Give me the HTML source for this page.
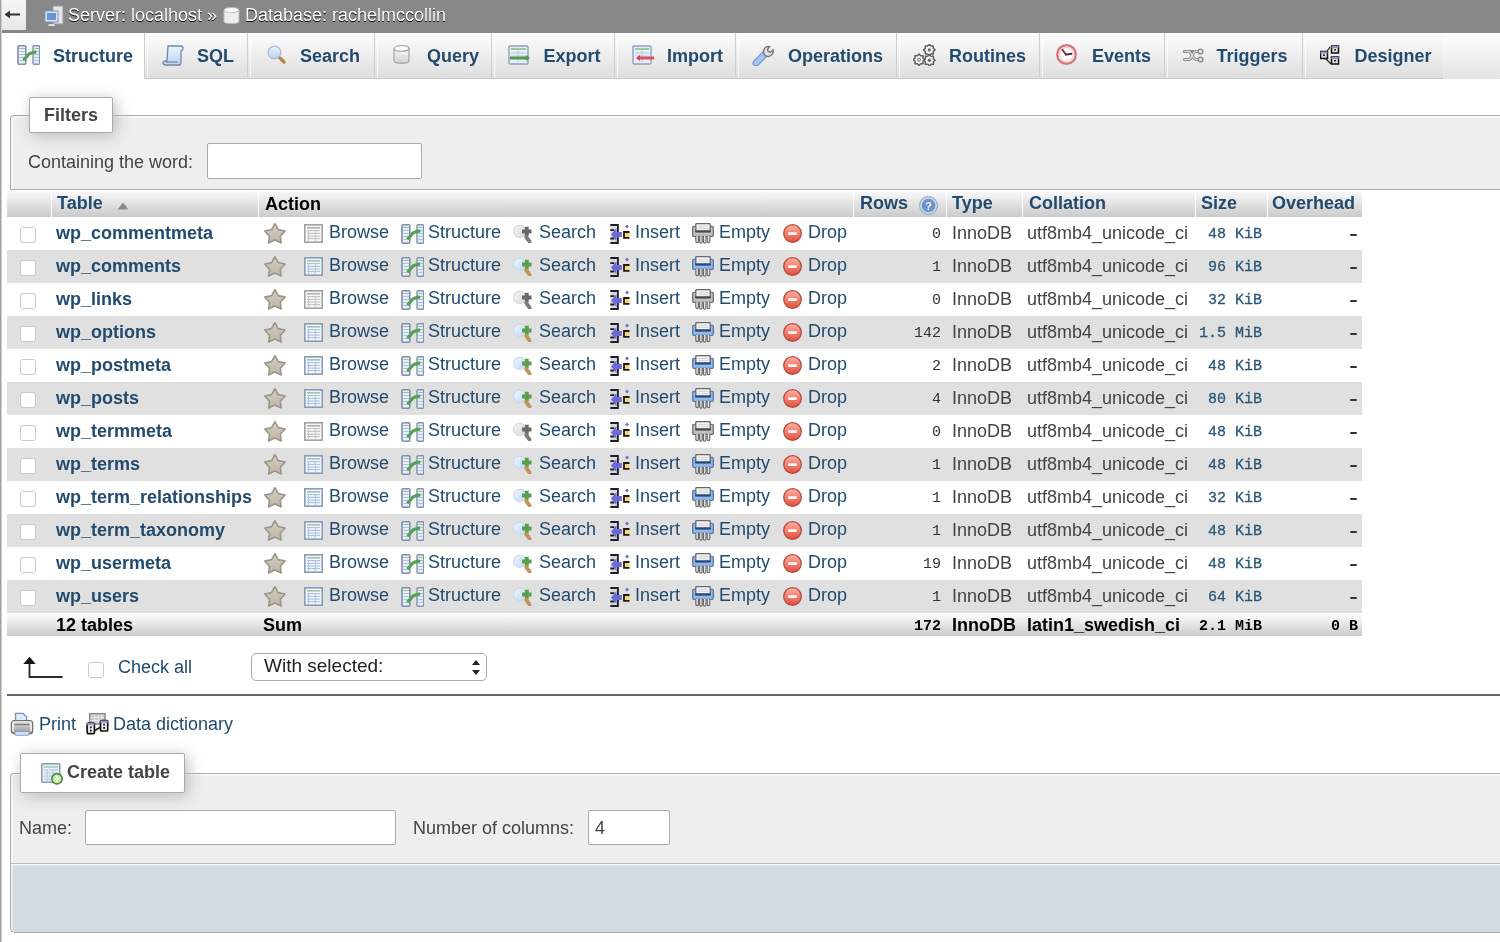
<!DOCTYPE html><html><head><meta charset="utf-8"><style>
*{margin:0;padding:0;box-sizing:border-box}
html,body{width:1500px;height:942px;overflow:hidden;background:#fff}
body{position:relative;font-family:"Liberation Sans",sans-serif;font-size:18px;color:#444}
.a{position:absolute}
.t{position:absolute;white-space:nowrap;line-height:20px}
.lk{color:#224b6e}
.b{font-weight:bold}
.mono{font-family:"Liberation Mono",monospace;font-size:15px}
svg.i{position:absolute;overflow:visible}
#topbar{left:0;top:0;width:1500px;height:33px;background:#888}
#coll{left:1px;top:0;width:25px;height:30px;background:linear-gradient(#f6f6f6,#e8e8e8)}
#navb{left:0;top:0;width:1px;height:942px;background:#a0a0a0;box-shadow:1px 0 0 #d0d0d0}
#tabs{left:2px;top:33px;width:1498px;height:46px;background:linear-gradient(#fff,#e3e3e3)}
.tab{position:absolute;top:33px;height:46px;background:linear-gradient(#fdfdfd,#dedede);border-left:1px solid #cfcfcf;border-bottom:1px solid #c8c8c8}
.tab:after{content:"";position:absolute;left:2px;top:0;width:1px;height:100%;background:rgba(255,255,255,.7)}
.tab.act{background:#fff;border:none}
.tab.act:after{display:none}
.tabt{position:absolute;top:13px;font-weight:bold;color:#224b6e;line-height:20px;white-space:nowrap}
.fs{position:absolute;background:#eee;border:1px solid #aaa;border-right:none;border-radius:4px 0 0 0;box-shadow:inset 1px 1px 2px #fff}
.leg{position:absolute;background:#fff;border:1px solid #aaa;border-radius:2px;box-shadow:3px 3px 15px #bbb}
.inp{position:absolute;background:#fff;border:1px solid #aaa;border-radius:2px}
.th{position:absolute;top:191px;height:26px;background:linear-gradient(#f9f9f9,#cbcbcb)}
.row{position:absolute;left:7px;width:1355px;height:33px}
.row.e{background:#e0e0e0}
.cb{position:absolute;width:16px;height:16px;border:1px solid #c9c9c9;border-radius:3px;background:#fff}
</style></head><body><div id="wrap" style="position:absolute;left:0;top:0;width:1500px;height:942px;overflow:hidden;background:#fff;will-change:transform">
<svg width="0" height="0" style="position:absolute">
<defs>
<linearGradient id="gb" x1="0" y1="0" x2="0" y2="1"><stop offset="0" stop-color="#eaf4ff"/><stop offset="1" stop-color="#b9d3f0"/></linearGradient>
<linearGradient id="gg" x1="0" y1="0" x2="0" y2="1"><stop offset="0" stop-color="#fafafa"/><stop offset="1" stop-color="#d0d0d0"/></linearGradient>
<linearGradient id="gred" x1="0" y1="0" x2="0" y2="1"><stop offset="0" stop-color="#ffb2a6"/><stop offset=".55" stop-color="#f07a6a"/><stop offset="1" stop-color="#e05040"/></linearGradient>
<radialGradient id="ghelp" cx=".4" cy=".35" r=".7"><stop offset="0" stop-color="#c9dcf3"/><stop offset="1" stop-color="#7ea0cc"/></radialGradient>
</defs>
<symbol id="i-server" viewBox="0 0 21 22">
 <rect x="9" y="1" width="10" height="18" fill="#e6e6e6" stroke="#9a9a9a"/>
 <rect x="1" y="6" width="13" height="11" fill="#d6e4f5" stroke="#7f98b8"/>
 <rect x="3" y="8" width="9" height="7" fill="#6b96d6"/>
 <path d="M5 19h5l1 2H4z" fill="#ddd"/>
</symbol>
<symbol id="i-db" viewBox="0 0 17 20">
 <path d="M1 4v12c0 2 15 2 15 0V4" fill="#eee" stroke="#bbb"/>
 <ellipse cx="8.5" cy="4" rx="7.5" ry="2.5" fill="#fff" stroke="#bbb"/>
</symbol>
<symbol id="i-struct" viewBox="0 0 23 22">
 <rect x="1.2" y="1.8" width="7.6" height="18.4" rx="1" fill="#e4eefa" stroke="#8796b0" stroke-width="1.6"/>
 <rect x="15.2" y="1.8" width="7" height="18.4" rx="1" fill="#e4eefa" stroke="#8796b0" stroke-width="1.6"/>
 <path d="M2.5 4.5h5.5" stroke="#9fc59a" stroke-width="1.2"/><path d="M16.5 4.5h5" stroke="#9fc59a" stroke-width="1.2"/>
 <path d="M2.5 7.5h5.5M2.5 10.5h5.5M2.5 13.5h5.5M2.5 16.5h5.5M16.5 7.5h5M16.5 10.5h5M16.5 13.5h5M16.5 16.5h5" stroke="#b4c4da" stroke-width="1"/>
 <path d="M5.5 17C8 15.5 9.5 13 11 11.5S14 9.5 15.5 8.5" stroke="#4e9a4e" stroke-width="3" fill="none" stroke-linecap="round"/>
</symbol>
<symbol id="i-rstruct" viewBox="0 0 23 20">
 <rect x="1" y="0.8" width="7.8" height="18.4" rx="1" fill="#e6f0fb" stroke="#7f8ea9" stroke-width="1.6"/>
 <rect x="16" y="0.8" width="6.6" height="18.4" rx="1" fill="#e6f0fb" stroke="#8493ad" stroke-width="1.4"/>
 <path d="M2.3 3.5h5.5M17.2 3.5h5" stroke="#9cc096" stroke-width="1.2"/>
 <path d="M2.3 6.5h5.5M2.3 9.5h5.5M2.3 12.5h5.5M2.3 15.5h5.5M17.2 6.5h5M17.2 9.5h5M17.2 12.5h5M17.2 15.5h5" stroke="#b0c0d6" stroke-width="1"/>
 <path d="M7.2 14.2C9 13 10 10.5 12 9S15.5 7.5 18 7.2" stroke="#55a052" stroke-width="3.2" fill="none" stroke-linecap="round"/>
</symbol>
<symbol id="i-sql" viewBox="0 0 23 22">
 <path d="M6 2h13c1.5 0 2 1 2 2s-1 3-2 3v11c0 2-1 3-2 3H4c-2 0-3-1-3-2s1-2 3-2h1z" fill="url(#gb)" stroke="#6f8aa8" stroke-width="1.3"/>
 <path d="M4 18h12" stroke="#6f8aa8" stroke-width="1.2"/>
</symbol>
<symbol id="i-search" viewBox="0 0 23 22">
 <circle cx="8.5" cy="8.5" r="6.3" fill="url(#gb)" stroke="#a8bdd6" stroke-width="1.3"/>
 <path d="M14 14l4 4" stroke="#b98545" stroke-width="3.4" stroke-linecap="round"/>
</symbol>
<symbol id="i-query" viewBox="0 0 23 22">
 <path d="M2 4v13c0 3 15 3 15 0V4" fill="url(#gg)" stroke="#aaa" stroke-width="1.3"/>
 <ellipse cx="9.5" cy="4.5" rx="7.5" ry="2.8" fill="#fff" stroke="#aaa" stroke-width="1.3"/>
</symbol>
<symbol id="i-export" viewBox="0 0 23 22">
 <rect x="1" y="2" width="19" height="18" rx="1" fill="#e3eefa" stroke="#8ea1bd" stroke-width="1.4"/>
 <path d="M3 5h15" stroke="#8fbf8a" stroke-width="1.6"/><path d="M3 9h15M3 12h15M10 6v12" stroke="#b7c7db" stroke-width=".9"/>
 <path d="M2 14h17" stroke="#4f9a4a" stroke-width="3"/><path d="M18 11l4 3-4 3z" fill="#4f9a4a"/>
</symbol>
<symbol id="i-import" viewBox="0 0 23 22">
 <rect x="1" y="2" width="18" height="18" rx="1" fill="#e3eefa" stroke="#8ea1bd" stroke-width="1.4"/>
 <path d="M3 5h14" stroke="#8fbf8a" stroke-width="1.6"/><path d="M3 9h14M3 12h14M10 6v12" stroke="#b7c7db" stroke-width=".9"/>
 <path d="M8 14h14" stroke="#e05060" stroke-width="3"/><path d="M8 11l-4 3 4 3z" fill="#d04050"/>
</symbol>
<symbol id="i-ops" viewBox="0 0 23 22">
 <path d="M4 19L12 11" stroke="#7393c9" stroke-width="7" stroke-linecap="round"/>
 <path d="M4 19L12 11" stroke="#a9c3ef" stroke-width="4.6" stroke-linecap="round"/>
 <path d="M12.5 10.5c-1.8-2.6-1-6.3 2-7.6 1.2-.5 2.3-.6 3.3-.3l-2.3 2.6.6 2.4 2.4.6 2.5-2.3c.4 1.3.2 2.8-.5 4-1.6 2.4-4.6 3-7 1.8z" fill="#e6e6e6" stroke="#7a7a7a" stroke-width="1.5" stroke-linejoin="round"/>
</symbol>
<symbol id="i-routines" viewBox="0 0 23 22">
 <g fill="#f5f5f5" stroke="#5e5e5e" stroke-width="1.5" stroke-linejoin="round">
 <path d="M16.3 0.2 L17.9 1.9 L20.3 1.9 L20.3 4.3 L22.0 5.9 L20.3 7.5 L20.3 9.9 L17.9 9.9 L16.3 11.6 L14.7 9.9 L12.3 9.9 L12.3 7.5 L10.6 5.9 L12.3 4.3 L12.3 1.9 L14.7 1.9Z"/><path d="M16.4 10.5 L18.0 12.2 L20.4 12.2 L20.4 14.6 L22.1 16.2 L20.4 17.8 L20.4 20.2 L18.0 20.2 L16.4 21.9 L14.8 20.2 L12.4 20.2 L12.4 17.8 L10.7 16.2 L12.4 14.6 L12.4 12.2 L14.8 12.2Z"/><path d="M6.0 10.0 L7.6 11.7 L10.0 11.7 L10.0 14.1 L11.7 15.7 L10.0 17.3 L10.0 19.7 L7.6 19.7 L6.0 21.4 L4.4 19.7 L2.0 19.7 L2.0 17.3 L0.3 15.7 L2.0 14.1 L2.0 11.7 L4.4 11.7Z"/>
 </g>
 <circle cx="16.3" cy="5.9" r="1.6" fill="#6a6a6a"/><circle cx="6" cy="15.7" r="1.5" fill="none" stroke="#6a6a6a" stroke-width="1"/><circle cx="16.4" cy="16.2" r="1.7" fill="#6a6a6a"/>
</symbol>
<symbol id="i-events" viewBox="0 0 23 22">
 <circle cx="10.5" cy="10.5" r="9.3" fill="#fff" stroke="#d2787e" stroke-width="2.4"/>
 <circle cx="10.5" cy="10.5" r="6.9" fill="none" stroke="#f2cfcf" stroke-width="1.2"/>
 <path d="M6.3 5.6L10 10.6" stroke="#7a3a44" stroke-width="1.8" stroke-linecap="round"/>
 <path d="M10 10.6L15.4 9.7" stroke="#333" stroke-width="1.9" stroke-linecap="round"/>
</symbol>
<symbol id="i-triggers" viewBox="0 0 23 22">
 <g fill="none" stroke="#8c8c8c" stroke-width="3" stroke-linecap="round">
 <path d="M11 4.5H7M4 4.5H2.5"/><path d="M2.5 12.5H7c2.5 0 3.5-8 7-8h3"/><path d="M2.5 4.5H7c2.5 0 3.5 8 7 8h3"/>
 </g>
 <g fill="none" stroke="#e8e8e8" stroke-width="1.1" stroke-linecap="round">
 <path d="M2.5 12.5H7c2.5 0 3.5-8 7-8h3"/><path d="M2.5 4.5H7c2.5 0 3.5 8 7 8h3"/>
 </g>
 <circle cx="18.5" cy="4.5" r="2.4" fill="#e0e0e0" stroke="#8c8c8c" stroke-width="1.4"/>
 <circle cx="18.5" cy="12.5" r="2.4" fill="#e0e0e0" stroke="#8c8c8c" stroke-width="1.4"/>
</symbol>
<symbol id="i-designer" viewBox="0 0 23 22">
 <path d="M5 10L10 3M5 14l6 6" stroke="#222" stroke-width="1.2"/>
 <rect x="0.5" y="7.5" width="7" height="7" fill="#ddd" stroke="#111" stroke-width="1.5"/>
 <rect x="11.5" y="2" width="7" height="7" fill="#ddd" stroke="#111" stroke-width="1.5"/>
 <rect x="11.5" y="13" width="7" height="7" fill="#ddd" stroke="#111" stroke-width="1.5"/>
 <path d="M11.5 2h7v2h-7zM11.5 13h7v2h-7zM.5 7.5h7v2h-7z" fill="#9a8fd0"/>
 <rect x="3" y="10.5" width="2" height="1.5" fill="#222"/><rect x="14" y="5" width="2" height="1.5" fill="#222"/><rect x="14" y="16" width="2" height="1.5" fill="#222"/>
</symbol>
<symbol id="i-help" viewBox="0 0 19 19">
 <circle cx="9.5" cy="9.5" r="9" fill="#c5d8ef" stroke="#8fa6c4" stroke-width="1"/>
 <circle cx="9.5" cy="9.5" r="6.8" fill="#6f95c6"/>
 <text x="9.5" y="14" font-family="Liberation Sans" font-weight="bold" font-size="11" fill="#e8f2ff" text-anchor="middle">?</text>
</symbol>
<symbol id="i-star" viewBox="0 0 22 22">
 <defs><linearGradient id="gstar" x1="0" y1="0" x2="0" y2="1"><stop offset="0" stop-color="#d4cfc4"/><stop offset="1" stop-color="#bdb4a3"/></linearGradient></defs>
 <path d="M10.9 1.6 L14.2 7.6 L21.1 9.0 L16.3 14.2 L17.2 21.0 L10.9 18.1 L4.6 21.0 L5.5 14.2 L0.7 9.0 L7.6 7.6Z" fill="url(#gstar)" stroke="#9c968a" stroke-width="1.6" stroke-linejoin="round"/>
</symbol>
<symbol id="i-browse" viewBox="0 0 19 19">
 <rect x="0.8" y="0.8" width="17.4" height="17.4" fill="#eef6ff" stroke="#8b9cb6" stroke-width="1.6"/>
 <path d="M3 3.8h13" stroke="#a3bf9f" stroke-width="1.5"/>
 <path d="M3 6.6h13M3 9.4h13M3 12.1h13M3 14.6h13" stroke="#a9bbd3" stroke-width="1"/>
 <path d="M4.5 6v11M11.3 6v11" stroke="#b5c4d8" stroke-width="1"/>
</symbol>
<symbol id="i-browse-g" viewBox="0 0 19 19">
 <rect x="0.8" y="0.8" width="17.4" height="17.4" fill="#f7f7f7" stroke="#a2a2a2" stroke-width="1.6"/>
 <path d="M3 3.8h13" stroke="#ababab" stroke-width="1.5"/>
 <path d="M3 6.6h13M3 9.4h13M3 12.1h13M3 14.6h13" stroke="#bdbdbd" stroke-width="1"/>
 <path d="M4.5 6v11M11.3 6v11" stroke="#c8c8c8" stroke-width="1"/>
</symbol>
<symbol id="i-rsearch" viewBox="0 0 19 19">
 <defs><linearGradient id="gsb" x1="0" y1="0" x2="1" y2="1"><stop offset="0" stop-color="#eef6ff"/><stop offset="1" stop-color="#c2daf4"/></linearGradient></defs>
 <circle cx="6.7" cy="7.3" r="6.2" fill="url(#gsb)" stroke="#c6d6ea" stroke-width="1"/>
 <path d="M13.8 2.8v9.4M9 7.5h9.5" stroke="#5a9e4e" stroke-width="3.8"/>
 <path d="M13.2 13l3.4 4.6" stroke="#c29456" stroke-width="3.8" stroke-linecap="round"/>
</symbol>
<symbol id="i-rsearch-g" viewBox="0 0 19 19">
 <defs><linearGradient id="gsg" x1="0" y1="0" x2="1" y2="1"><stop offset="0" stop-color="#f8f8f8"/><stop offset="1" stop-color="#d6d6d6"/></linearGradient></defs>
 <circle cx="6.7" cy="7.3" r="6.2" fill="url(#gsg)" stroke="#d4d4d4" stroke-width="1"/>
 <path d="M13.8 2.8v9.4M9 7.5h9.5" stroke="#6a6a6a" stroke-width="3.8"/>
 <path d="M13.2 13l3.4 4.6" stroke="#7d7d7d" stroke-width="3.8" stroke-linecap="round"/>
</symbol>
<symbol id="i-insert" viewBox="0 0 20 20">
 <rect x="0.5" y="1" width="7.5" height="18" fill="#d8d8d8"/>
 <path d="M0.3 1h7.6v18H0.3" stroke="#1e1e2a" stroke-width="1.8" fill="none"/>
 <path d="M0.3 6.2h4M0.3 14.5h4" stroke="#1e1e2a" stroke-width="1.8"/>
 <path d="M1 10.6L6.5 4.2v3.9h5.3v5H6.5v3.8z" fill="#6b6bd6"/>
 <path d="M17 0.5l2 2-2 2-2-2z" fill="#7474c8"/>
 <path d="M19.5 8H14v5.8h5.5" stroke="#1e1a10" stroke-width="1.8" fill="#f1d77a"/>
</symbol>
<symbol id="i-empty" viewBox="0 0 22 21">
 <rect x="0.7" y="3.3" width="20.6" height="10" rx="1" fill="#8fb8ec" stroke="#5a78a8" stroke-width="1.3"/>
 <rect x="3.8" y="0.7" width="14.4" height="7.8" rx="0.6" fill="#f2f2f2" stroke="#6a6a6a" stroke-width="1.3"/>
 <path d="M6 3.5h10M6 5.5h10" stroke="#cfcfcf" stroke-width="0.8"/>
 <path d="M3.2 8.4h15.6" stroke="#26487c" stroke-width="2.2"/>
 <g stroke="#6a6a6a" stroke-width="1.15" fill="#e4e4e4"><path d="M3.8 13v5c0 2.3 2.6 2.3 2.6 0v-5"/><path d="M7.6 13v5.5c0 2.3 2.6 2.3 2.6 0V13"/><path d="M11.4 13v5.5c0 2.3 2.6 2.3 2.6 0V13"/><path d="M15.2 13v5c0 2.3 2.6 2.3 2.6 0v-5"/></g>
</symbol>
<symbol id="i-empty-g" viewBox="0 0 22 21">
 <rect x="0.7" y="3.3" width="20.6" height="10" rx="1" fill="#c2c2c2" stroke="#707070" stroke-width="1.3"/>
 <rect x="3.8" y="0.7" width="14.4" height="7.8" rx="0.6" fill="#f2f2f2" stroke="#6a6a6a" stroke-width="1.3"/>
 <path d="M6 3.5h10M6 5.5h10" stroke="#cfcfcf" stroke-width="0.8"/>
 <path d="M3.2 8.4h15.6" stroke="#4a4a4a" stroke-width="2.2"/>
 <g stroke="#6a6a6a" stroke-width="1.15" fill="#e4e4e4"><path d="M3.8 13v5c0 2.3 2.6 2.3 2.6 0v-5"/><path d="M7.6 13v5.5c0 2.3 2.6 2.3 2.6 0V13"/><path d="M11.4 13v5.5c0 2.3 2.6 2.3 2.6 0V13"/><path d="M15.2 13v5c0 2.3 2.6 2.3 2.6 0v-5"/></g>
</symbol>
<symbol id="i-drop" viewBox="0 0 19 19">
 <circle cx="9.5" cy="9.5" r="8.8" fill="url(#gred)" stroke="#b4463c" stroke-width="1.2"/>
 <rect x="5.2" y="8.3" width="8.6" height="2.6" fill="#fff"/>
</symbol>
<symbol id="i-arrow" viewBox="0 0 40 23">
 <path d="M6.5 7v14H38.8" stroke="#2a2a2a" stroke-width="1.9" fill="none" stroke-linecap="round"/>
 <path d="M6.5 0.8L0.3 7.9H12.7z" fill="#151515"/>
</symbol>
<symbol id="i-print" viewBox="0 0 24 24">
 <defs><linearGradient id="gpr" x1="0" y1="0" x2="0" y2="1"><stop offset="0" stop-color="#e8e8e8"/><stop offset=".5" stop-color="#bdbdbd"/><stop offset="1" stop-color="#8e8e8e"/></linearGradient></defs>
 <path d="M5.5 1.3h7.5l3.7 3.7v8H5.5z" fill="#dbeafc" stroke="#7d95b5" stroke-width="1.3"/>
 <rect x="1.3" y="8.5" width="21.4" height="13.3" rx="3" fill="url(#gpr)" stroke="#6e6e6e" stroke-width="1.2"/>
 <path d="M3 10.5v9M21 10.5v9" stroke="#f4f4f4" stroke-width="1.5"/>
 <path d="M4.5 12.5h15" stroke="#777" stroke-width="1.3"/>
 <rect x="5" y="19.5" width="14" height="3.8" rx="1" fill="#cfe0f4" stroke="#8aa0bd" stroke-width="1"/>
</symbol>
<symbol id="i-dict" viewBox="0 0 23 23">
 <rect x="3.6" y="1.6" width="15.5" height="10.5" fill="#c9c9c9" stroke="#8a8a8a" stroke-width="1.3"/>
 <path d="M5 5.5h13M5 8.5h13M8.5 3v8M12.5 3v8M15.5 3v8" stroke="#e6e6e6" stroke-width="1"/>
 <path d="M8 19l6.5-3.8" stroke="#111" stroke-width="1.5"/>
 <rect x="1.2" y="11" width="7.2" height="10.6" rx="1" fill="#f2f2f2" stroke="#111" stroke-width="1.7"/>
 <rect x="14.5" y="8.6" width="7.2" height="10.4" rx="1" fill="#f2f2f2" stroke="#111" stroke-width="1.7"/>
 <path d="M1.2 11h7.2v2.2H1.2zM14.5 8.6h7.2v2.2h-7.2z" fill="#9d93d4"/>
 <circle cx="4.8" cy="15.3" r="1.1" fill="#222"/><circle cx="4.8" cy="18.6" r="1.1" fill="#222"/>
 <circle cx="18.1" cy="12.6" r="1.1" fill="#222"/><circle cx="18.1" cy="15.9" r="1.1" fill="#222"/>
</symbol>
<symbol id="i-newtbl" viewBox="0 0 22 22">
 <rect x="0.8" y="0.8" width="18" height="18.4" rx="1" fill="#e6f0fb" stroke="#8a9ab4" stroke-width="1.5"/>
 <path d="M3 4h14" stroke="#a3c59c" stroke-width="1.4"/>
 <path d="M3 7h14M3 10h14M3 13h14M3 16h14" stroke="#b3c3da" stroke-width="1"/>
 <path d="M6.5 6v12M12 6v12" stroke="#c0cde0" stroke-width="1"/>
 <circle cx="16" cy="15.8" r="5.2" fill="#bfe8a8" stroke="#4f8a3c" stroke-width="1.6"/>
 <path d="M13.2 15.8h5.6M16 13v5.6" stroke="#f0ffe8" stroke-width="2"/>
</symbol>
</svg>

<div class="a" id="topbar"></div>
<div class="a" id="coll"></div>
<svg class="i" style="left:4px;top:10px" width="17" height="9"><path d="M2 4.5H16" stroke="#333" stroke-width="2"/><path d="M0.5 4.5L6 0.5V8.5Z" fill="#333"/></svg>
<div class="a" id="navb"></div>
<svg class="i" style="left:44px;top:5px" width="21" height="22"><use href="#i-server"/></svg>
<div class="t" style="left:68px;top:5px;color:#fff;text-shadow:0 1px 0 #000">Server: localhost &raquo;</div>
<svg class="i" style="left:223px;top:6px" width="17" height="20"><use href="#i-db"/></svg>
<div class="t" style="left:245px;top:5px;color:#fff;text-shadow:0 1px 0 #000">Database: rachelmccollin</div>
<div class="a" id="tabs"></div>
<div class="tab act" style="left:2px;width:142px"></div>
<svg class="i" style="left:17px;top:45px" width="23" height="20"><use href="#i-rstruct"/></svg>
<div class="tabt" style="left:53px;top:46px">Structure</div>
<div class="tab" style="left:144px;width:103px"></div>
<svg class="i" style="left:162px;top:44px" width="23" height="22"><use href="#i-sql"/></svg>
<div class="tabt" style="left:197px;top:46px">SQL</div>
<div class="tab" style="left:247px;width:127px"></div>
<svg class="i" style="left:266px;top:44px" width="23" height="22"><use href="#i-search"/></svg>
<div class="tabt" style="left:300px;top:46px">Search</div>
<div class="tab" style="left:374px;width:116.5px"></div>
<svg class="i" style="left:392px;top:44px" width="23" height="22"><use href="#i-query"/></svg>
<div class="tabt" style="left:427px;top:46px">Query</div>
<div class="tab" style="left:490.5px;width:123.5px"></div>
<svg class="i" style="left:508px;top:44px" width="23" height="22"><use href="#i-export"/></svg>
<div class="tabt" style="left:543.5px;top:46px">Export</div>
<div class="tab" style="left:614px;width:121px"></div>
<svg class="i" style="left:632px;top:44px" width="23" height="22"><use href="#i-import"/></svg>
<div class="tabt" style="left:667px;top:46px">Import</div>
<div class="tab" style="left:735px;width:161px"></div>
<svg class="i" style="left:752px;top:44px" width="23" height="22"><use href="#i-ops"/></svg>
<div class="tabt" style="left:788px;top:46px">Operations</div>
<div class="tab" style="left:896px;width:143px"></div>
<svg class="i" style="left:913px;top:44px" width="23" height="22"><use href="#i-routines"/></svg>
<div class="tabt" style="left:949px;top:46px">Routines</div>
<div class="tab" style="left:1039px;width:124.5px"></div>
<svg class="i" style="left:1056px;top:44px" width="23" height="22"><use href="#i-events"/></svg>
<div class="tabt" style="left:1092px;top:46px">Events</div>
<div class="tab" style="left:1163.5px;width:138.0px"></div>
<svg class="i" style="left:1182px;top:47px" width="23" height="22"><use href="#i-triggers"/></svg>
<div class="tabt" style="left:1216.5px;top:46px">Triggers</div>
<div class="tab" style="left:1301.5px;width:141.0px"></div>
<svg class="i" style="left:1320px;top:44px" width="23" height="22"><use href="#i-designer"/></svg>
<div class="tabt" style="left:1354.5px;top:46px">Designer</div>
<div class="fs" style="left:10px;top:115px;width:1495px;height:75px"></div>
<div class="leg" style="left:29px;top:97px;width:84px;height:36px"></div>
<div class="t b" style="left:44px;top:105px;color:#444">Filters</div>
<div class="t" style="left:28px;top:152px">Containing the word:</div>
<div class="inp" style="left:207px;top:143px;width:215px;height:36px"></div>
<div class="th" style="left:7px;width:44px"></div>
<div class="th" style="left:52px;width:206px"></div>
<div class="th" style="left:259px;width:594px"></div>
<div class="th" style="left:854px;width:92px"></div>
<div class="th" style="left:947px;width:75px"></div>
<div class="th" style="left:1023px;width:172px"></div>
<div class="th" style="left:1196px;width:71px"></div>
<div class="th" style="left:1268px;width:94px"></div>
<div class="t b lk" style="left:57px;top:193px">Table</div>
<svg class="i" style="left:117px;top:202px" width="12" height="8"><path d="M6 0.5L11.5 7.5H0.5Z" fill="#8a8a8a"/></svg>
<div class="t b" style="left:265px;top:194px;color:#000">Action</div>
<div class="t b lk" style="left:860px;top:193px">Rows</div>
<svg class="i" style="left:919px;top:195.5px" width="19" height="19"><use href="#i-help"/></svg>
<div class="t b lk" style="left:952px;top:193px">Type</div>
<div class="t b lk" style="left:1029px;top:193px">Collation</div>
<div class="t b lk" style="left:1201px;top:193px">Size</div>
<div class="t b lk" style="left:1272px;top:193px">Overhead</div>
<div class="row" style="top:217px"></div>
<div class="cb" style="left:20px;top:227px"></div>
<div class="t b lk" style="left:56px;top:223px">wp_commentmeta</div>
<svg class="i" style="left:264px;top:222px" width="22" height="22"><use href="#i-star"/></svg>
<svg class="i" style="left:304px;top:224px" width="19" height="19"><use href="#i-browse-g"/></svg>
<div class="t lk" style="left:329px;top:222px">Browse</div>
<svg class="i" style="left:400.5px;top:224px" width="23" height="20"><use href="#i-rstruct"/></svg>
<div class="t lk" style="left:428px;top:222px">Structure</div>
<svg class="i" style="left:513px;top:224px" width="19" height="19"><use href="#i-rsearch-g"/></svg>
<div class="t lk" style="left:539px;top:222px">Search</div>
<svg class="i" style="left:610px;top:224px" width="20" height="20"><use href="#i-insert"/></svg>
<div class="t lk" style="left:635px;top:222px">Insert</div>
<svg class="i" style="left:692px;top:223px" width="22" height="21"><use href="#i-empty-g"/></svg>
<div class="t lk" style="left:719px;top:222px">Empty</div>
<svg class="i" style="left:783px;top:224px" width="19" height="19"><use href="#i-drop"/></svg>
<div class="t lk" style="left:808px;top:222px">Drop</div>
<div class="t mono" style="right:559px;top:225px;color:#333">0</div>
<div class="t" style="left:952px;top:223px">InnoDB</div>
<div class="t" style="left:1027px;top:223px">utf8mb4_unicode_ci</div>
<div class="t mono" style="right:238px;top:225px;color:#2b5878;-webkit-text-stroke:0.3px #2b5878">48 KiB</div>
<div class="a" style="left:1350px;top:234px;width:7px;height:2px;background:#333;border-radius:1px"></div>
<div class="row e" style="top:250px"></div>
<div class="cb" style="left:20px;top:260px"></div>
<div class="t b lk" style="left:56px;top:256px">wp_comments</div>
<svg class="i" style="left:264px;top:255px" width="22" height="22"><use href="#i-star"/></svg>
<svg class="i" style="left:304px;top:257px" width="19" height="19"><use href="#i-browse"/></svg>
<div class="t lk" style="left:329px;top:255px">Browse</div>
<svg class="i" style="left:400.5px;top:257px" width="23" height="20"><use href="#i-rstruct"/></svg>
<div class="t lk" style="left:428px;top:255px">Structure</div>
<svg class="i" style="left:513px;top:257px" width="19" height="19"><use href="#i-rsearch"/></svg>
<div class="t lk" style="left:539px;top:255px">Search</div>
<svg class="i" style="left:610px;top:257px" width="20" height="20"><use href="#i-insert"/></svg>
<div class="t lk" style="left:635px;top:255px">Insert</div>
<svg class="i" style="left:692px;top:256px" width="22" height="21"><use href="#i-empty"/></svg>
<div class="t lk" style="left:719px;top:255px">Empty</div>
<svg class="i" style="left:783px;top:257px" width="19" height="19"><use href="#i-drop"/></svg>
<div class="t lk" style="left:808px;top:255px">Drop</div>
<div class="t mono" style="right:559px;top:258px;color:#333">1</div>
<div class="t" style="left:952px;top:256px">InnoDB</div>
<div class="t" style="left:1027px;top:256px">utf8mb4_unicode_ci</div>
<div class="t mono" style="right:238px;top:258px;color:#2b5878;-webkit-text-stroke:0.3px #2b5878">96 KiB</div>
<div class="a" style="left:1350px;top:267px;width:7px;height:2px;background:#333;border-radius:1px"></div>
<div class="row" style="top:283px"></div>
<div class="cb" style="left:20px;top:293px"></div>
<div class="t b lk" style="left:56px;top:289px">wp_links</div>
<svg class="i" style="left:264px;top:288px" width="22" height="22"><use href="#i-star"/></svg>
<svg class="i" style="left:304px;top:290px" width="19" height="19"><use href="#i-browse-g"/></svg>
<div class="t lk" style="left:329px;top:288px">Browse</div>
<svg class="i" style="left:400.5px;top:290px" width="23" height="20"><use href="#i-rstruct"/></svg>
<div class="t lk" style="left:428px;top:288px">Structure</div>
<svg class="i" style="left:513px;top:290px" width="19" height="19"><use href="#i-rsearch-g"/></svg>
<div class="t lk" style="left:539px;top:288px">Search</div>
<svg class="i" style="left:610px;top:290px" width="20" height="20"><use href="#i-insert"/></svg>
<div class="t lk" style="left:635px;top:288px">Insert</div>
<svg class="i" style="left:692px;top:289px" width="22" height="21"><use href="#i-empty-g"/></svg>
<div class="t lk" style="left:719px;top:288px">Empty</div>
<svg class="i" style="left:783px;top:290px" width="19" height="19"><use href="#i-drop"/></svg>
<div class="t lk" style="left:808px;top:288px">Drop</div>
<div class="t mono" style="right:559px;top:291px;color:#333">0</div>
<div class="t" style="left:952px;top:289px">InnoDB</div>
<div class="t" style="left:1027px;top:289px">utf8mb4_unicode_ci</div>
<div class="t mono" style="right:238px;top:291px;color:#2b5878;-webkit-text-stroke:0.3px #2b5878">32 KiB</div>
<div class="a" style="left:1350px;top:300px;width:7px;height:2px;background:#333;border-radius:1px"></div>
<div class="row e" style="top:316px"></div>
<div class="cb" style="left:20px;top:326px"></div>
<div class="t b lk" style="left:56px;top:322px">wp_options</div>
<svg class="i" style="left:264px;top:321px" width="22" height="22"><use href="#i-star"/></svg>
<svg class="i" style="left:304px;top:323px" width="19" height="19"><use href="#i-browse"/></svg>
<div class="t lk" style="left:329px;top:321px">Browse</div>
<svg class="i" style="left:400.5px;top:323px" width="23" height="20"><use href="#i-rstruct"/></svg>
<div class="t lk" style="left:428px;top:321px">Structure</div>
<svg class="i" style="left:513px;top:323px" width="19" height="19"><use href="#i-rsearch"/></svg>
<div class="t lk" style="left:539px;top:321px">Search</div>
<svg class="i" style="left:610px;top:323px" width="20" height="20"><use href="#i-insert"/></svg>
<div class="t lk" style="left:635px;top:321px">Insert</div>
<svg class="i" style="left:692px;top:322px" width="22" height="21"><use href="#i-empty"/></svg>
<div class="t lk" style="left:719px;top:321px">Empty</div>
<svg class="i" style="left:783px;top:323px" width="19" height="19"><use href="#i-drop"/></svg>
<div class="t lk" style="left:808px;top:321px">Drop</div>
<div class="t mono" style="right:559px;top:324px;color:#333">142</div>
<div class="t" style="left:952px;top:322px">InnoDB</div>
<div class="t" style="left:1027px;top:322px">utf8mb4_unicode_ci</div>
<div class="t mono" style="right:238px;top:324px;color:#2b5878;-webkit-text-stroke:0.3px #2b5878">1.5 MiB</div>
<div class="a" style="left:1350px;top:333px;width:7px;height:2px;background:#333;border-radius:1px"></div>
<div class="row" style="top:349px"></div>
<div class="cb" style="left:20px;top:359px"></div>
<div class="t b lk" style="left:56px;top:355px">wp_postmeta</div>
<svg class="i" style="left:264px;top:354px" width="22" height="22"><use href="#i-star"/></svg>
<svg class="i" style="left:304px;top:356px" width="19" height="19"><use href="#i-browse"/></svg>
<div class="t lk" style="left:329px;top:354px">Browse</div>
<svg class="i" style="left:400.5px;top:356px" width="23" height="20"><use href="#i-rstruct"/></svg>
<div class="t lk" style="left:428px;top:354px">Structure</div>
<svg class="i" style="left:513px;top:356px" width="19" height="19"><use href="#i-rsearch"/></svg>
<div class="t lk" style="left:539px;top:354px">Search</div>
<svg class="i" style="left:610px;top:356px" width="20" height="20"><use href="#i-insert"/></svg>
<div class="t lk" style="left:635px;top:354px">Insert</div>
<svg class="i" style="left:692px;top:355px" width="22" height="21"><use href="#i-empty"/></svg>
<div class="t lk" style="left:719px;top:354px">Empty</div>
<svg class="i" style="left:783px;top:356px" width="19" height="19"><use href="#i-drop"/></svg>
<div class="t lk" style="left:808px;top:354px">Drop</div>
<div class="t mono" style="right:559px;top:357px;color:#333">2</div>
<div class="t" style="left:952px;top:355px">InnoDB</div>
<div class="t" style="left:1027px;top:355px">utf8mb4_unicode_ci</div>
<div class="t mono" style="right:238px;top:357px;color:#2b5878;-webkit-text-stroke:0.3px #2b5878">48 KiB</div>
<div class="a" style="left:1350px;top:366px;width:7px;height:2px;background:#333;border-radius:1px"></div>
<div class="row e" style="top:382px"></div>
<div class="cb" style="left:20px;top:392px"></div>
<div class="t b lk" style="left:56px;top:388px">wp_posts</div>
<svg class="i" style="left:264px;top:387px" width="22" height="22"><use href="#i-star"/></svg>
<svg class="i" style="left:304px;top:389px" width="19" height="19"><use href="#i-browse"/></svg>
<div class="t lk" style="left:329px;top:387px">Browse</div>
<svg class="i" style="left:400.5px;top:389px" width="23" height="20"><use href="#i-rstruct"/></svg>
<div class="t lk" style="left:428px;top:387px">Structure</div>
<svg class="i" style="left:513px;top:389px" width="19" height="19"><use href="#i-rsearch"/></svg>
<div class="t lk" style="left:539px;top:387px">Search</div>
<svg class="i" style="left:610px;top:389px" width="20" height="20"><use href="#i-insert"/></svg>
<div class="t lk" style="left:635px;top:387px">Insert</div>
<svg class="i" style="left:692px;top:388px" width="22" height="21"><use href="#i-empty"/></svg>
<div class="t lk" style="left:719px;top:387px">Empty</div>
<svg class="i" style="left:783px;top:389px" width="19" height="19"><use href="#i-drop"/></svg>
<div class="t lk" style="left:808px;top:387px">Drop</div>
<div class="t mono" style="right:559px;top:390px;color:#333">4</div>
<div class="t" style="left:952px;top:388px">InnoDB</div>
<div class="t" style="left:1027px;top:388px">utf8mb4_unicode_ci</div>
<div class="t mono" style="right:238px;top:390px;color:#2b5878;-webkit-text-stroke:0.3px #2b5878">80 KiB</div>
<div class="a" style="left:1350px;top:399px;width:7px;height:2px;background:#333;border-radius:1px"></div>
<div class="row" style="top:415px"></div>
<div class="cb" style="left:20px;top:425px"></div>
<div class="t b lk" style="left:56px;top:421px">wp_termmeta</div>
<svg class="i" style="left:264px;top:420px" width="22" height="22"><use href="#i-star"/></svg>
<svg class="i" style="left:304px;top:422px" width="19" height="19"><use href="#i-browse-g"/></svg>
<div class="t lk" style="left:329px;top:420px">Browse</div>
<svg class="i" style="left:400.5px;top:422px" width="23" height="20"><use href="#i-rstruct"/></svg>
<div class="t lk" style="left:428px;top:420px">Structure</div>
<svg class="i" style="left:513px;top:422px" width="19" height="19"><use href="#i-rsearch-g"/></svg>
<div class="t lk" style="left:539px;top:420px">Search</div>
<svg class="i" style="left:610px;top:422px" width="20" height="20"><use href="#i-insert"/></svg>
<div class="t lk" style="left:635px;top:420px">Insert</div>
<svg class="i" style="left:692px;top:421px" width="22" height="21"><use href="#i-empty-g"/></svg>
<div class="t lk" style="left:719px;top:420px">Empty</div>
<svg class="i" style="left:783px;top:422px" width="19" height="19"><use href="#i-drop"/></svg>
<div class="t lk" style="left:808px;top:420px">Drop</div>
<div class="t mono" style="right:559px;top:423px;color:#333">0</div>
<div class="t" style="left:952px;top:421px">InnoDB</div>
<div class="t" style="left:1027px;top:421px">utf8mb4_unicode_ci</div>
<div class="t mono" style="right:238px;top:423px;color:#2b5878;-webkit-text-stroke:0.3px #2b5878">48 KiB</div>
<div class="a" style="left:1350px;top:432px;width:7px;height:2px;background:#333;border-radius:1px"></div>
<div class="row e" style="top:448px"></div>
<div class="cb" style="left:20px;top:458px"></div>
<div class="t b lk" style="left:56px;top:454px">wp_terms</div>
<svg class="i" style="left:264px;top:453px" width="22" height="22"><use href="#i-star"/></svg>
<svg class="i" style="left:304px;top:455px" width="19" height="19"><use href="#i-browse"/></svg>
<div class="t lk" style="left:329px;top:453px">Browse</div>
<svg class="i" style="left:400.5px;top:455px" width="23" height="20"><use href="#i-rstruct"/></svg>
<div class="t lk" style="left:428px;top:453px">Structure</div>
<svg class="i" style="left:513px;top:455px" width="19" height="19"><use href="#i-rsearch"/></svg>
<div class="t lk" style="left:539px;top:453px">Search</div>
<svg class="i" style="left:610px;top:455px" width="20" height="20"><use href="#i-insert"/></svg>
<div class="t lk" style="left:635px;top:453px">Insert</div>
<svg class="i" style="left:692px;top:454px" width="22" height="21"><use href="#i-empty"/></svg>
<div class="t lk" style="left:719px;top:453px">Empty</div>
<svg class="i" style="left:783px;top:455px" width="19" height="19"><use href="#i-drop"/></svg>
<div class="t lk" style="left:808px;top:453px">Drop</div>
<div class="t mono" style="right:559px;top:456px;color:#333">1</div>
<div class="t" style="left:952px;top:454px">InnoDB</div>
<div class="t" style="left:1027px;top:454px">utf8mb4_unicode_ci</div>
<div class="t mono" style="right:238px;top:456px;color:#2b5878;-webkit-text-stroke:0.3px #2b5878">48 KiB</div>
<div class="a" style="left:1350px;top:465px;width:7px;height:2px;background:#333;border-radius:1px"></div>
<div class="row" style="top:481px"></div>
<div class="cb" style="left:20px;top:491px"></div>
<div class="t b lk" style="left:56px;top:487px">wp_term_relationships</div>
<svg class="i" style="left:264px;top:486px" width="22" height="22"><use href="#i-star"/></svg>
<svg class="i" style="left:304px;top:488px" width="19" height="19"><use href="#i-browse"/></svg>
<div class="t lk" style="left:329px;top:486px">Browse</div>
<svg class="i" style="left:400.5px;top:488px" width="23" height="20"><use href="#i-rstruct"/></svg>
<div class="t lk" style="left:428px;top:486px">Structure</div>
<svg class="i" style="left:513px;top:488px" width="19" height="19"><use href="#i-rsearch"/></svg>
<div class="t lk" style="left:539px;top:486px">Search</div>
<svg class="i" style="left:610px;top:488px" width="20" height="20"><use href="#i-insert"/></svg>
<div class="t lk" style="left:635px;top:486px">Insert</div>
<svg class="i" style="left:692px;top:487px" width="22" height="21"><use href="#i-empty"/></svg>
<div class="t lk" style="left:719px;top:486px">Empty</div>
<svg class="i" style="left:783px;top:488px" width="19" height="19"><use href="#i-drop"/></svg>
<div class="t lk" style="left:808px;top:486px">Drop</div>
<div class="t mono" style="right:559px;top:489px;color:#333">1</div>
<div class="t" style="left:952px;top:487px">InnoDB</div>
<div class="t" style="left:1027px;top:487px">utf8mb4_unicode_ci</div>
<div class="t mono" style="right:238px;top:489px;color:#2b5878;-webkit-text-stroke:0.3px #2b5878">32 KiB</div>
<div class="a" style="left:1350px;top:498px;width:7px;height:2px;background:#333;border-radius:1px"></div>
<div class="row e" style="top:514px"></div>
<div class="cb" style="left:20px;top:524px"></div>
<div class="t b lk" style="left:56px;top:520px">wp_term_taxonomy</div>
<svg class="i" style="left:264px;top:519px" width="22" height="22"><use href="#i-star"/></svg>
<svg class="i" style="left:304px;top:521px" width="19" height="19"><use href="#i-browse"/></svg>
<div class="t lk" style="left:329px;top:519px">Browse</div>
<svg class="i" style="left:400.5px;top:521px" width="23" height="20"><use href="#i-rstruct"/></svg>
<div class="t lk" style="left:428px;top:519px">Structure</div>
<svg class="i" style="left:513px;top:521px" width="19" height="19"><use href="#i-rsearch"/></svg>
<div class="t lk" style="left:539px;top:519px">Search</div>
<svg class="i" style="left:610px;top:521px" width="20" height="20"><use href="#i-insert"/></svg>
<div class="t lk" style="left:635px;top:519px">Insert</div>
<svg class="i" style="left:692px;top:520px" width="22" height="21"><use href="#i-empty"/></svg>
<div class="t lk" style="left:719px;top:519px">Empty</div>
<svg class="i" style="left:783px;top:521px" width="19" height="19"><use href="#i-drop"/></svg>
<div class="t lk" style="left:808px;top:519px">Drop</div>
<div class="t mono" style="right:559px;top:522px;color:#333">1</div>
<div class="t" style="left:952px;top:520px">InnoDB</div>
<div class="t" style="left:1027px;top:520px">utf8mb4_unicode_ci</div>
<div class="t mono" style="right:238px;top:522px;color:#2b5878;-webkit-text-stroke:0.3px #2b5878">48 KiB</div>
<div class="a" style="left:1350px;top:531px;width:7px;height:2px;background:#333;border-radius:1px"></div>
<div class="row" style="top:547px"></div>
<div class="cb" style="left:20px;top:557px"></div>
<div class="t b lk" style="left:56px;top:553px">wp_usermeta</div>
<svg class="i" style="left:264px;top:552px" width="22" height="22"><use href="#i-star"/></svg>
<svg class="i" style="left:304px;top:554px" width="19" height="19"><use href="#i-browse"/></svg>
<div class="t lk" style="left:329px;top:552px">Browse</div>
<svg class="i" style="left:400.5px;top:554px" width="23" height="20"><use href="#i-rstruct"/></svg>
<div class="t lk" style="left:428px;top:552px">Structure</div>
<svg class="i" style="left:513px;top:554px" width="19" height="19"><use href="#i-rsearch"/></svg>
<div class="t lk" style="left:539px;top:552px">Search</div>
<svg class="i" style="left:610px;top:554px" width="20" height="20"><use href="#i-insert"/></svg>
<div class="t lk" style="left:635px;top:552px">Insert</div>
<svg class="i" style="left:692px;top:553px" width="22" height="21"><use href="#i-empty"/></svg>
<div class="t lk" style="left:719px;top:552px">Empty</div>
<svg class="i" style="left:783px;top:554px" width="19" height="19"><use href="#i-drop"/></svg>
<div class="t lk" style="left:808px;top:552px">Drop</div>
<div class="t mono" style="right:559px;top:555px;color:#333">19</div>
<div class="t" style="left:952px;top:553px">InnoDB</div>
<div class="t" style="left:1027px;top:553px">utf8mb4_unicode_ci</div>
<div class="t mono" style="right:238px;top:555px;color:#2b5878;-webkit-text-stroke:0.3px #2b5878">48 KiB</div>
<div class="a" style="left:1350px;top:564px;width:7px;height:2px;background:#333;border-radius:1px"></div>
<div class="row e" style="top:580px"></div>
<div class="cb" style="left:20px;top:590px"></div>
<div class="t b lk" style="left:56px;top:586px">wp_users</div>
<svg class="i" style="left:264px;top:585px" width="22" height="22"><use href="#i-star"/></svg>
<svg class="i" style="left:304px;top:587px" width="19" height="19"><use href="#i-browse"/></svg>
<div class="t lk" style="left:329px;top:585px">Browse</div>
<svg class="i" style="left:400.5px;top:587px" width="23" height="20"><use href="#i-rstruct"/></svg>
<div class="t lk" style="left:428px;top:585px">Structure</div>
<svg class="i" style="left:513px;top:587px" width="19" height="19"><use href="#i-rsearch"/></svg>
<div class="t lk" style="left:539px;top:585px">Search</div>
<svg class="i" style="left:610px;top:587px" width="20" height="20"><use href="#i-insert"/></svg>
<div class="t lk" style="left:635px;top:585px">Insert</div>
<svg class="i" style="left:692px;top:586px" width="22" height="21"><use href="#i-empty"/></svg>
<div class="t lk" style="left:719px;top:585px">Empty</div>
<svg class="i" style="left:783px;top:587px" width="19" height="19"><use href="#i-drop"/></svg>
<div class="t lk" style="left:808px;top:585px">Drop</div>
<div class="t mono" style="right:559px;top:588px;color:#333">1</div>
<div class="t" style="left:952px;top:586px">InnoDB</div>
<div class="t" style="left:1027px;top:586px">utf8mb4_unicode_ci</div>
<div class="t mono" style="right:238px;top:588px;color:#2b5878;-webkit-text-stroke:0.3px #2b5878">64 KiB</div>
<div class="a" style="left:1350px;top:597px;width:7px;height:2px;background:#333;border-radius:1px"></div>
<div class="a" style="left:7px;top:613px;width:1355px;height:23px;background:linear-gradient(#fff,#cacaca)"></div>
<div class="t b" style="left:56px;top:615px;color:#000">12 tables</div>
<div class="t b" style="left:263px;top:615px;color:#000">Sum</div>
<div class="t mono b" style="right:559px;top:617px;color:#000">172</div>
<div class="t b" style="left:952px;top:615px;color:#000">InnoDB</div>
<div class="t b" style="left:1027px;top:615px;color:#000">latin1_swedish_ci</div>
<div class="t mono b" style="right:238px;top:617px;color:#000">2.1 MiB</div>
<div class="t mono b" style="right:142px;top:617px;color:#000">0 B</div>
<svg class="i" style="left:23px;top:656px" width="40" height="23"><use href="#i-arrow"/></svg>
<div class="cb" style="left:88px;top:662px"></div>
<div class="t lk" style="left:118px;top:657px">Check all</div>
<div class="a" style="left:251px;top:653px;width:236px;height:28px;border:1px solid #aaa;border-radius:5px;background:#fff"></div>
<div class="t" style="left:264px;top:656px;color:#222;font-size:19px">With selected:</div>
<svg class="i" style="left:471px;top:659px" width="10" height="17"><path d="M5 1L9 6H1Z M5 16L9 11H1Z" fill="#222"/></svg>
<div class="a" style="left:7px;top:694px;width:1493px;height:2px;background:#666"></div>
<svg class="i" style="left:10px;top:712px" width="24" height="24"><use href="#i-print"/></svg>
<div class="t lk" style="left:39px;top:714px">Print</div>
<svg class="i" style="left:86px;top:712px" width="23" height="23"><use href="#i-dict"/></svg>
<div class="t lk" style="left:113px;top:714px">Data dictionary</div>
<div class="fs" style="left:10px;top:773px;width:1495px;height:91px;border-radius:4px 0 0 0"></div>
<div class="a" style="left:10px;top:863px;width:1495px;height:70px;background:#d3dbe2;border:1px solid #aaa;border-top-color:#bbb;border-right:none;border-radius:0 0 0 5px;box-shadow:inset 1px 1px 2px #fff"></div>
<div class="leg" style="left:20px;top:753px;width:165px;height:40px"></div>
<svg class="i" style="left:41px;top:763px" width="22" height="22"><use href="#i-newtbl"/></svg>
<div class="t b" style="left:67px;top:762px;color:#444">Create table</div>
<div class="t" style="left:19px;top:818px">Name:</div>
<div class="inp" style="left:85px;top:810px;width:311px;height:35px"></div>
<div class="t" style="left:413px;top:818px">Number of columns:</div>
<div class="inp" style="left:588px;top:810px;width:82px;height:35px"></div>
<div class="t" style="left:595px;top:818px">4</div>
</div></body></html>
